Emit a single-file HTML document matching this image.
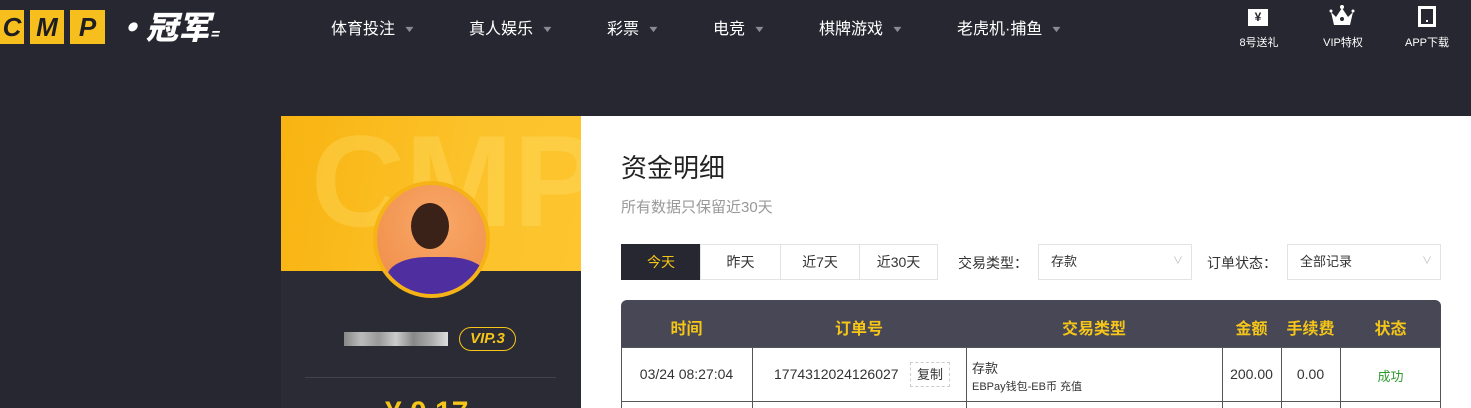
<!DOCTYPE html>
<html><head><meta charset="utf-8"><style>
*{margin:0;padding:0;box-sizing:border-box}
html,body{width:1471px;height:408px;overflow:hidden;background:#272731}
body{font-family:"Liberation Sans","Noto Sans CJK SC",sans-serif;position:relative}
.a{position:absolute}
.nav{color:#fff;font-size:16px;top:15px}
.nav span{color:#8a8a95;font-size:9px;margin-left:10px;display:inline-block;transform:scaleX(1.5) translateY(-2px)}
.ic{color:#fff;font-size:11px;text-align:center;width:60px;top:34px}
.btn{top:244px;height:36px;border:1px solid #e3e3e3;font-size:14px;line-height:34px;text-align:center;color:#333;background:#fff}
.sel{top:244px;height:36px;border:1px solid #e3e3e3;font-size:13px;line-height:34px;padding-left:12px;color:#333}
.sel i{position:absolute;right:8px;color:#bbb;font-style:normal;font-size:10px}
.th{color:#f5c518;font-size:16px;font-weight:bold;text-align:center;top:315px}
.td{font-size:14px;color:#333;text-align:center;top:366px}
.vl{background:#555;width:1px;top:347px;height:61px}
.lb{position:absolute;top:10px;height:34px;background:#f7bf1e;font:italic 900 26px 'Liberation Sans';color:#1e1e22;text-align:center;line-height:34px}
</style></head><body>
<div class="lb" style="left:0;width:24px">C</div>
<div class="lb" style="left:30px;width:34px">M</div>
<div class="lb" style="left:70px;width:35px">P</div>
<div class="a" style="left:114px;top:4px;color:#fff;font:italic 900 32px 'Noto Sans CJK SC',sans-serif;line-height:44px">·冠军<span style="font-size:14px">=</span></div>
<div class="a nav" style="left:331px">体育投注<span>▼</span></div>
<div class="a nav" style="left:469px">真人娱乐<span>▼</span></div>
<div class="a nav" style="left:607px">彩票<span>▼</span></div>
<div class="a nav" style="left:713px">电竞<span>▼</span></div>
<div class="a nav" style="left:819px">棋牌游戏<span>▼</span></div>
<div class="a nav" style="left:957px">老虎机·捕鱼<span>▼</span></div>
<div class="a" style="left:1248px;top:9px;width:20px;height:17px;background:#fff;color:#272731;font-size:12px;font-weight:bold;text-align:center;line-height:17px">¥</div>
<svg class="a" style="left:1329px;top:4px" width="26" height="22"><path d="M2 8 L7 13 L13 4 L19 13 L24 8 L21 21 L5 21Z" fill="#fff"/><circle cx="13" cy="15" r="2" fill="#272731"/><circle cx="13" cy="3" r="2" fill="#fff"/><circle cx="2" cy="7" r="1.5" fill="#fff"/><circle cx="24" cy="7" r="1.5" fill="#fff"/></svg>
<svg class="a" style="left:1418px;top:6px" width="18" height="21"><rect x="1.5" y="1.5" width="15" height="18" fill="none" stroke="#fff" stroke-width="3"/><rect x="8" y="14" width="2" height="2" fill="#fff"/></svg>
<div class="a ic" style="left:1229px">8号送礼</div>
<div class="a ic" style="left:1313px">VIP特权</div>
<div class="a ic" style="left:1397px">APP下载</div>

<div class="a" style="left:281px;top:116px;width:300px;height:292px;background:#2b2b35"></div>
<div class="a" style="left:281px;top:116px;width:300px;height:155px;background:linear-gradient(100deg,#f8b411,#fcc22a 60%,#fdc52f);overflow:hidden">
<div style="position:absolute;left:30px;top:-10px;font:bold 130px 'Liberation Sans';color:rgba(255,230,120,.3)">CMP</div></div>
<div class="a" style="left:373px;top:181px;width:117px;height:117px;border-radius:50%;background:#f6b316"></div>
<div class="a" style="left:377px;top:185px;width:109px;height:109px;border-radius:50%;background:radial-gradient(circle at 55% 35%,#f9a868,#ef8a46);overflow:hidden">
<div style="position:absolute;left:34px;top:18px;width:38px;height:46px;border-radius:50%;background:#3a2218"></div>
<div style="position:absolute;left:10px;top:72px;width:100px;height:50px;border-radius:40% 40% 0 0;background:#4f2fa0"></div></div>
<div class="a" style="left:344px;top:332px;width:104px;height:14px;background:linear-gradient(90deg,#888,#bbb,#999,#ccc,#888,#aaa,#ddd)"></div>
<div class="a" style="left:459px;top:327px;width:57px;height:24px;border:1.5px solid #f5c518;border-radius:12px;color:#f5c518;font:italic bold 15px 'Liberation Sans';text-align:center;line-height:21px">VIP.3</div>
<div class="a" style="left:305px;top:377px;width:251px;height:1px;background:#42424d"></div>
<div class="a" style="left:385px;top:396px;color:#f5c518;font-size:30px;font-weight:bold">¥ 0.17</div>

<div class="a" style="left:581px;top:116px;width:890px;height:292px;background:#fff"></div>
<div class="a" style="left:621px;top:148px;font-size:26px;color:#222">资金明细</div>
<div class="a" style="left:621px;top:196px;font-size:15px;color:#999">所有数据只保留近30天</div>
<div class="a btn" style="left:621px;width:80px;background:#272731;border-color:#272731;color:#f5c518">今天</div>
<div class="a btn" style="left:700px;width:81px">昨天</div>
<div class="a btn" style="left:780px;width:80px">近7天</div>
<div class="a btn" style="left:859px;width:79px">近30天</div>
<div class="a" style="left:958px;top:253px;font-size:14px;color:#333">交易类型：</div>
<div class="a sel" style="left:1038px;width:154px">存款<i>∨</i></div>
<div class="a" style="left:1207px;top:253px;font-size:14px;color:#333">订单状态：</div>
<div class="a sel" style="left:1287px;width:154px">全部记录<i>∨</i></div>

<div class="a" style="left:621px;top:300px;width:820px;height:48px;background:#474756;border-radius:6px 6px 0 0"></div>
<div class="a" style="left:621px;top:347px;width:820px;height:61px;border:1px solid #555;border-bottom:none"></div>
<div class="a" style="left:621px;top:401px;width:820px;height:1px;background:#555"></div>
<div class="a vl" style="left:752px"></div><div class="a vl" style="left:966px"></div><div class="a vl" style="left:1222px"></div><div class="a vl" style="left:1281px"></div><div class="a vl" style="left:1340px"></div>
<div class="a th" style="left:621px;width:131px">时间</div>
<div class="a th" style="left:752px;width:214px">订单号</div>
<div class="a th" style="left:966px;width:256px">交易类型</div>
<div class="a th" style="left:1222px;width:59px">金额</div>
<div class="a th" style="left:1281px;width:59px">手续费</div>
<div class="a th" style="left:1340px;width:101px">状态</div>
<div class="a td" style="left:621px;width:131px">03/24 08:27:04</div>
<div class="a td" style="left:774px">1774312024126027</div>
<div class="a" style="left:910px;top:362px;width:40px;height:25px;border:1px dashed #ccc;font-size:13px;line-height:23px;text-align:center;color:#333">复制</div>
<div class="a" style="left:972px;top:358px;font-size:13px;color:#333">存款</div>
<div class="a" style="left:972px;top:378px;font-size:11px;color:#333">EBPay钱包-EB币 充值</div>
<div class="a td" style="left:1222px;width:59px">200.00</div>
<div class="a td" style="left:1281px;width:59px">0.00</div>
<div class="a td" style="left:1340px;width:101px;color:#2e9a2e;font-size:13px">成功</div>
</body></html>
